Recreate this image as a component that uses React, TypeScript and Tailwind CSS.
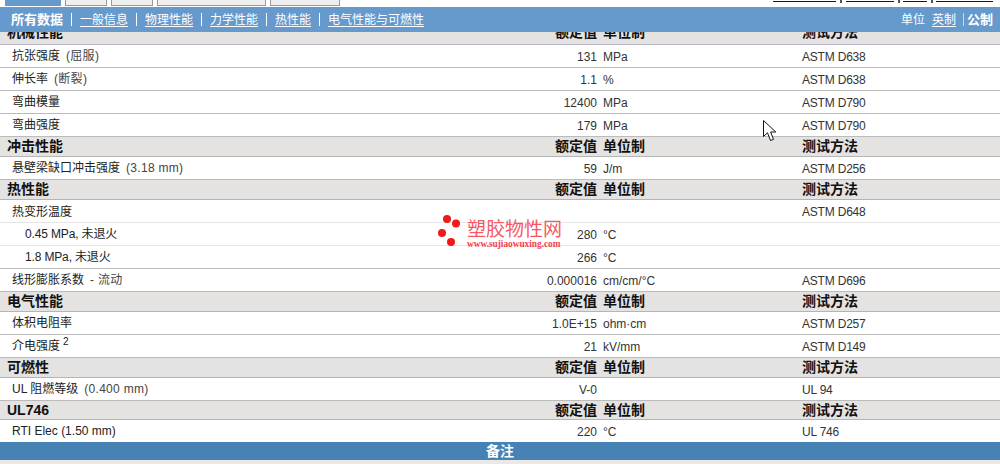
const SANS = "font-['Liberation_Sans','Noto_Sans_CJK_SC',sans-serif]";

type Row = {
  name: string;
  note?: string;
  sup?: string;
  value?: string;
  unit?: string;
  method?: string;
  indent?: boolean;
  light?: boolean;
};

type Section = { title: string; clipped?: boolean; short?: boolean; rows: Row[] };

const sections: Section[] = [
  {
    title: "机械性能",
    clipped: true,
    rows: [
      { name: "抗张强度", note: "(屈服)", value: "131", unit: "MPa", method: "ASTM D638" },
      { name: "伸长率", note: "(断裂)", value: "1.1", unit: "%", method: "ASTM D638" },
      { name: "弯曲模量", value: "12400", unit: "MPa", method: "ASTM D790" },
      { name: "弯曲强度", value: "179", unit: "MPa", method: "ASTM D790" },
    ],
  },
  {
    title: "冲击性能",
    rows: [{ name: "悬壁梁缺口冲击强度", note: "(3.18 mm)", value: "59", unit: "J/m", method: "ASTM D256" }],
  },
  {
    title: "热性能",
    rows: [
      { name: "热变形温度", method: "ASTM D648", light: true },
      { name: "0.45 MPa, 未退火", value: "280", unit: "°C", indent: true, light: true },
      { name: "1.8 MPa, 未退火", value: "266", unit: "°C", indent: true },
      { name: "线形膨胀系数", note: "- 流动", value: "0.000016", unit: "cm/cm/°C", method: "ASTM D696" },
    ],
  },
  {
    title: "电气性能",
    rows: [
      { name: "体积电阻率", value: "1.0E+15", unit: "ohm·cm", method: "ASTM D257" },
      { name: "介电强度", sup: "2", value: "21", unit: "kV/mm", method: "ASTM D149" },
    ],
  },
  {
    title: "可燃性",
    rows: [{ name: "UL 阻燃等级", note: "(0.400 mm)", value: "V-0", method: "UL 94" }],
  },
  {
    title: "UL746",
    short: true,
    rows: [{ name: "RTI Elec (1.50 mm)", value: "220", unit: "°C", method: "UL 746" }],
  },
];

const navLinks = ["一般信息", "物理性能", "力学性能", "热性能", "电气性能与可燃性"];

const SectionHeader = ({ title, clipped, short }: { title: string; clipped?: boolean; short?: boolean }) => (
  <div
    className={`grid grid-cols-[597px_205px_1fr] overflow-hidden bg-[#e4e3e2] text-[14px] leading-[19px] font-bold text-[#111] ${
      clipped
        ? "h-[13px] content-end border-b border-[#b9b6cc] pb-[2px]"
        : short
          ? "h-[19px] items-center border-b border-[#b5b5b5]"
          : "h-[20px] items-center border-b border-[#b5b5b5]"
    }`}
  >
    <div className="flex justify-between pl-[7px]">
      <span>{title}</span>
      <span>额定值</span>
    </div>
    <span className="pl-[6px]">单位制</span>
    <span>测试方法</span>
  </div>
);

const DataRow = ({ row, last }: { row: Row; last: boolean }) => (
  <div
    className={`grid grid-cols-[597px_199px_1fr] items-center bg-white text-[12px] leading-[22px] text-[#333] ${
      last ? "h-[22px]" : row.light ? "h-[23px] border-b border-[#e6e6e6]" : "h-[23px] border-b border-[#bbbbbb]"
    }`}
  >
    <div className="flex justify-between">
      <span className={`flex gap-[6px] text-[#222] ${row.indent ? "pl-[25px] tracking-[-0.15px]" : "pl-[12px]"}`}>
        <span>
          {row.name}
          {row.sup && <sup className="ml-[3px] text-[10px]">{row.sup}</sup>}
        </span>
        {row.note && <span className="tracking-[0.3px] text-[#444]">{row.note}</span>}
      </span>
      <span className="pt-px">{row.value}</span>
    </div>
    <span className="pt-px pl-[6px]">{row.unit}</span>
    <span className="pt-px pl-[6px] tracking-[-0.2px]">{row.method}</span>
  </div>
);

const Watermark = () => (
  <div className="absolute top-[214px] left-[437px] flex items-start gap-[5px]">
    <svg width="25" height="34" viewBox="0 0 25 34">
      <circle cx="10" cy="5" r="4" fill="#f01818" />
      <circle cx="19" cy="9.5" r="4" fill="#f01818" />
      <circle cx="5" cy="19" r="4" fill="#f01818" />
      <circle cx="14" cy="28" r="4" fill="#f01818" />
    </svg>
    <div className="flex flex-col pt-[6px]">
      <span className="text-[19px] leading-[19px] text-[#f55a64]">塑胶物性网</span>
      <span className="font-['Liberation_Serif',serif] text-[9.3px] leading-[10px] font-bold text-[#f2434f]">
        www.sujiaowuxing.com
      </span>
    </div>
  </div>
);

const Cursor = () => (
  <svg className="absolute top-[120px] left-[763px]" width="14" height="22" viewBox="0 0 14 22">
    <path
      d="M0.5 0.5 V16.5 L4.5 12.8 L7.5 20.5 L10.5 19.3 L7.6 12 H12.8 Z"
      fill="#fff"
      stroke="#111"
      strokeWidth="1"
      strokeLinejoin="miter"
    />
  </svg>
);

export default function App() {
  return (
    <div className={`relative h-[464px] w-[1000px] overflow-hidden bg-white ${SANS}`}>
      {/* top strip, tabs clipped by the scroll position */}
      <div className="flex h-[7px] items-start justify-between overflow-hidden pr-[7px] pl-[5px]">
        <div className="flex gap-[4px]">
          <div className="h-[6px] w-[56px] bg-[#6699cc]" />
          <div className="h-[6px] w-[42px] border-x border-b border-[#999] bg-[#efefef]" />
          <div className="h-[6px] w-[42px] border-x border-b border-[#999] bg-[#efefef]" />
          <div className="h-[6px] w-[109px] border-x border-b border-[#999] bg-[#efefef]" />
          <div className="h-[6px] w-[70px] border-x border-b border-[#999] bg-[#efefef]" />
        </div>
        <div className="flex h-[3px] items-start">
          <div className="mt-px h-px w-[63px] bg-[#0000cc]" />
          <div className="mx-[3.5px] h-[3px] w-[2px] bg-[#555]" />
          <div className="mt-px ml-[1px] h-px w-[48px] bg-[#0000cc]" />
          <div className="mx-[3.5px] h-[3px] w-[2px] bg-[#555]" />
          <div className="mt-px h-px w-[24px] bg-[#0000cc]" />
          <div className="mx-[3.5px] h-[3px] w-[2px] bg-[#555]" />
          <div className="mt-px h-px w-[57px] bg-[#0000cc]" />
        </div>
      </div>

      {/* blue nav */}
      <div className="flex h-[25px] items-center justify-between bg-[#6699cc] pr-[7px] pl-[11px] text-[12px] text-white">
        <div className="flex items-center">
          <span className="text-[13px] font-bold">所有数据</span>
          {navLinks.map((link) => (
            <span key={link} className="flex items-center">
              <span className="mx-[8px] h-[13px] w-px bg-white" />
              <a className="underline underline-offset-2">{link}</a>
            </span>
          ))}
        </div>
        <div className="flex items-center">
          <span>单位</span>
          <a className="ml-[7px] underline underline-offset-2">英制</a>
          <span className="mr-[3px] ml-[7px] h-[13px] w-px bg-[#cdd8ee]" />
          <span className="text-[13px] font-bold">公制</span>
        </div>
      </div>

      {/* property table */}
      {sections.map((section) => (
        <div key={section.title}>
          <SectionHeader title={section.title} clipped={section.clipped} short={section.short} />
          {section.rows.map((row, i) => (
            <DataRow
              key={row.name}
              row={row}
              last={i === section.rows.length - 1 && section.title === "UL746"}
            />
          ))}
        </div>
      ))}

      <div className="h-[18px] bg-[#4682b4] text-center text-[14px] leading-[18px] font-bold text-white">备注</div>
      <div className="h-[4px] bg-[#ece8e4]" />

      <Watermark />
      <Cursor />
    </div>
  );
}
